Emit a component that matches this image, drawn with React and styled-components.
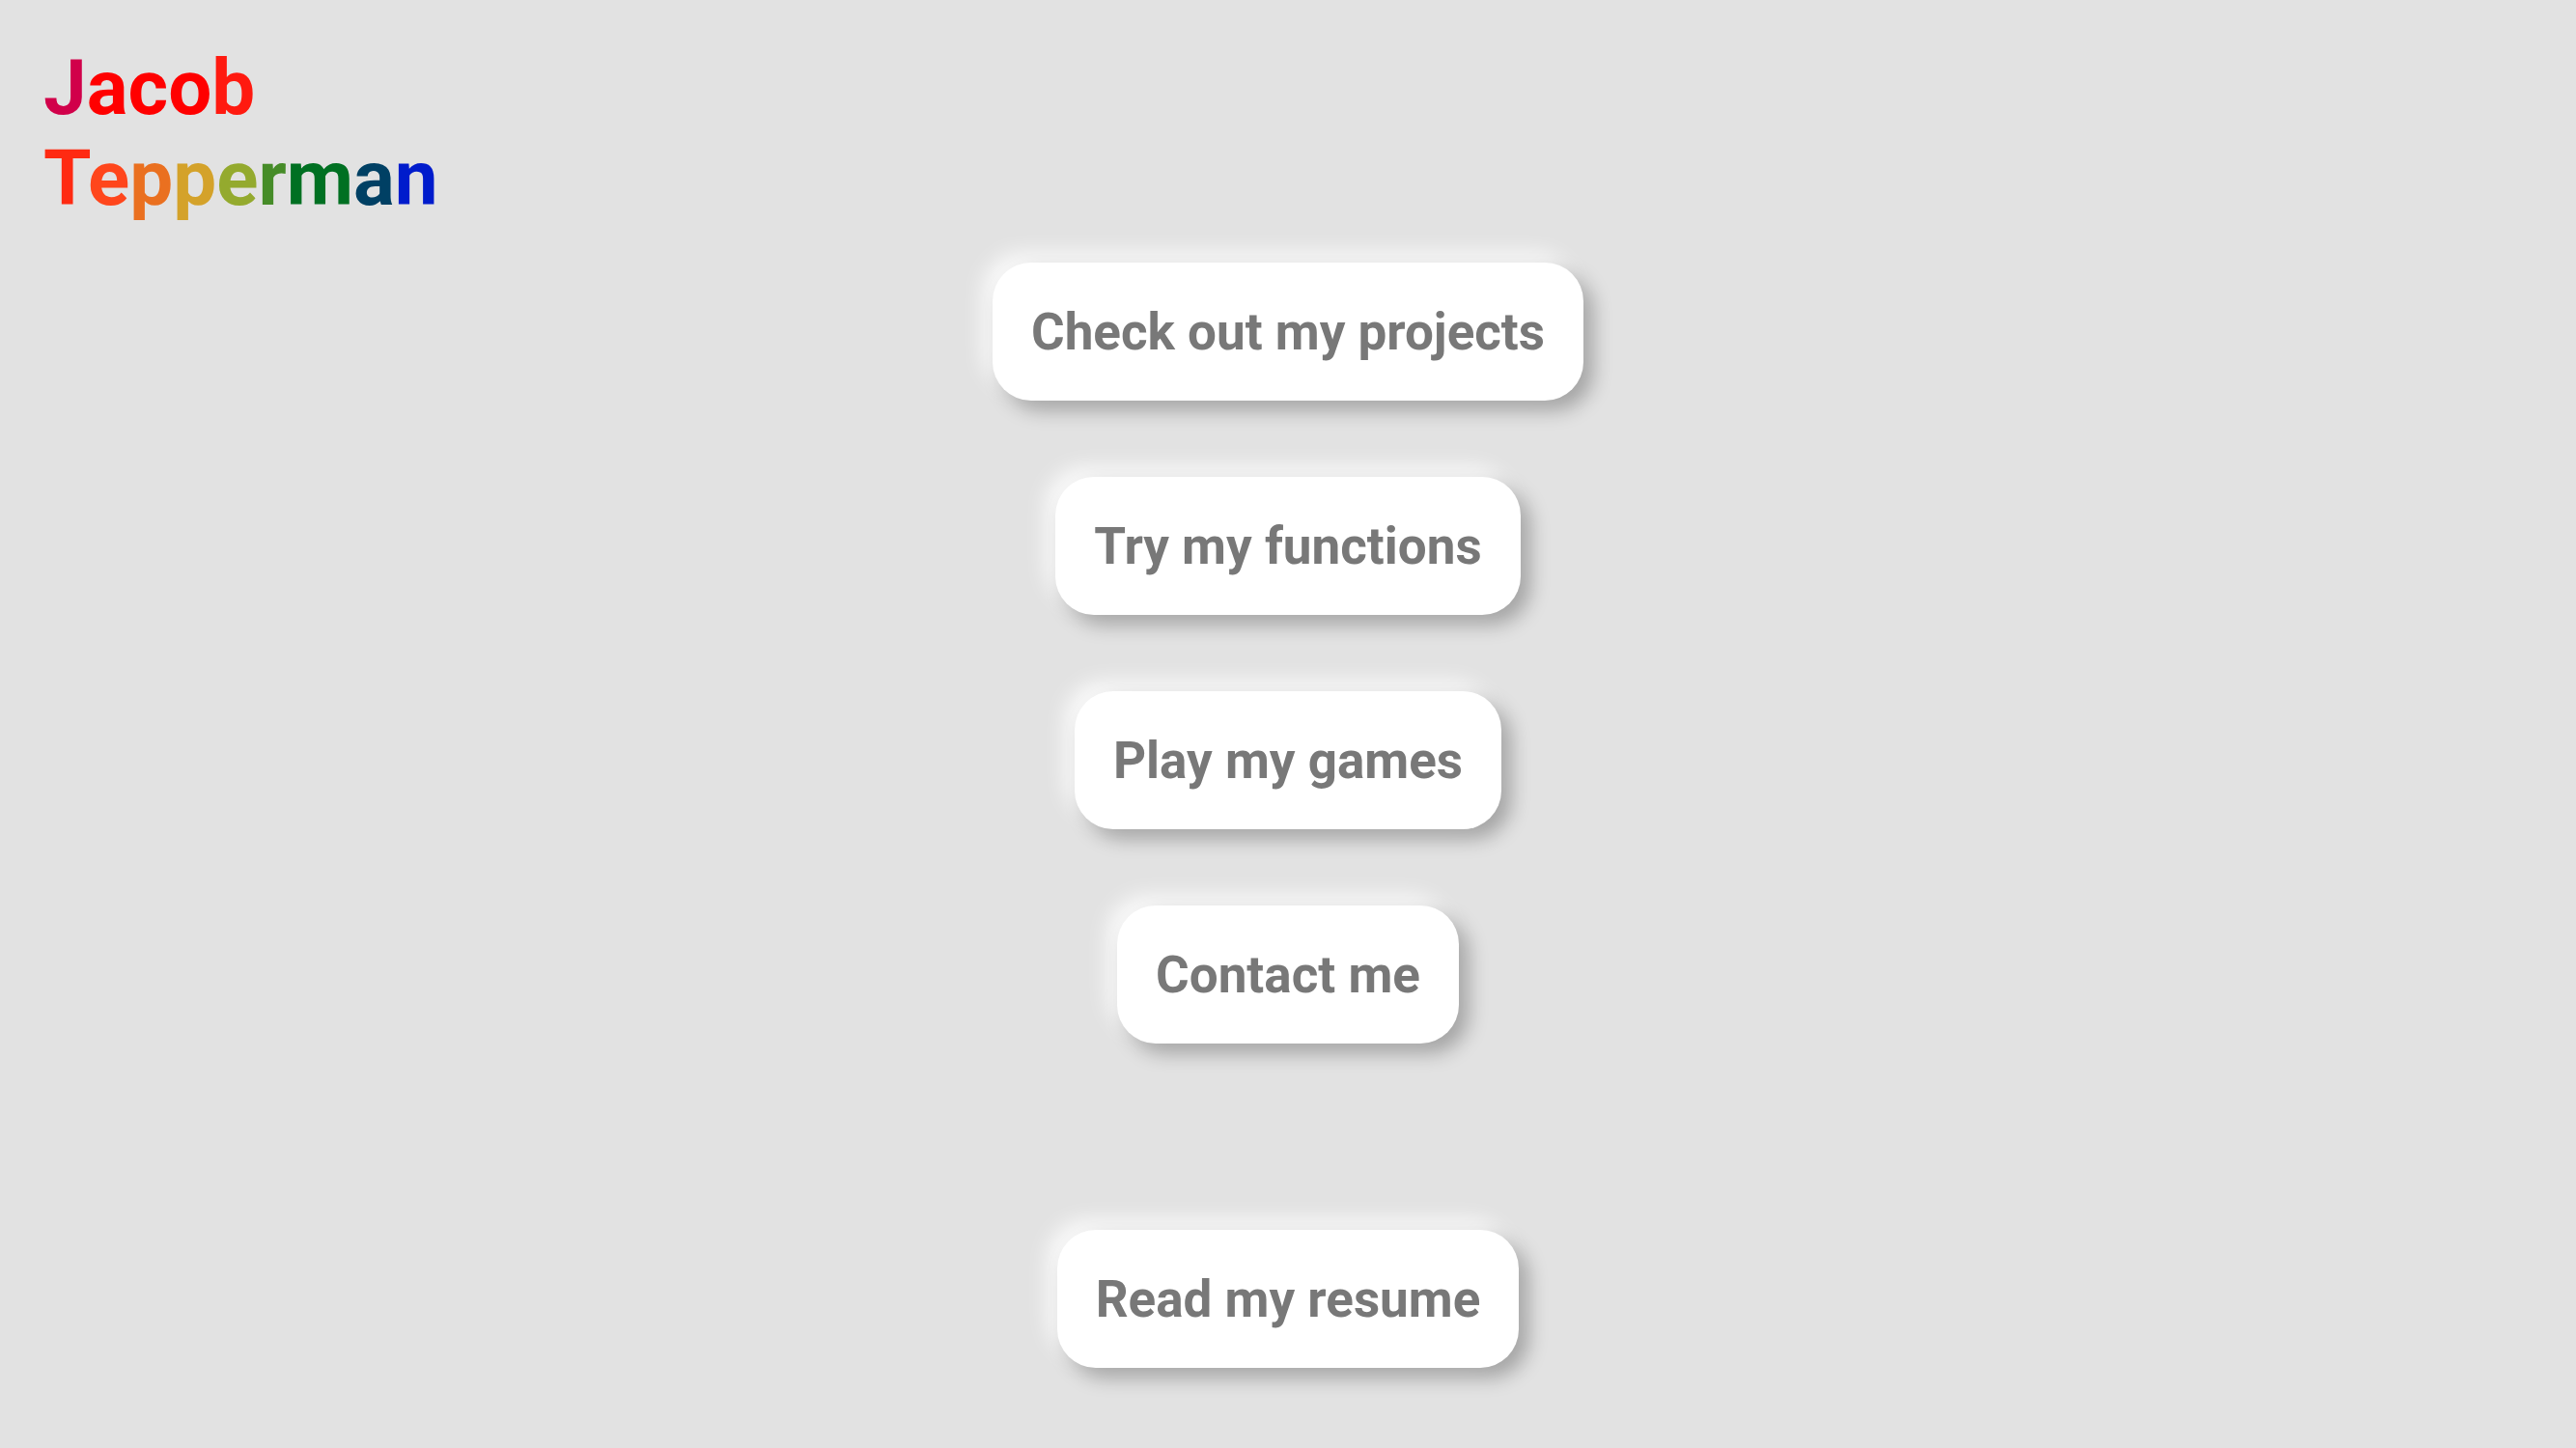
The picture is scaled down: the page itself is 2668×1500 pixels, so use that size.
import React from "react";
import styled, { createGlobalStyle } from "styled-components";

const GlobalStyle = createGlobalStyle`
  html, body {
    margin: 0;
    padding: 0;
    background-color: #e2e2e2;
  }
  body {
    font-family: Roboto, "Liberation Sans", sans-serif;
  }
`;

const Page = styled.div`
  min-height: 1500px;
  box-sizing: border-box;
  padding: 44px 0 0 45px;
  background-color: #e2e2e2;
`;

const Title = styled.h1`
  margin: 0;
  font-family: Roboto, "Liberation Sans", sans-serif;
  font-size: 80px;
  font-weight: 700;
  line-height: 94px;
  letter-spacing: 0;
`;

const Letter = styled.span`
  color: ${(props) => props.$color};
`;

const Menu = styled.nav`
  display: flex;
  flex-direction: column;
  align-items: center;
  gap: 79px;
  margin-top: 40px;
  margin-left: -45px;
`;

const MenuButton = styled.button`
  display: inline-flex;
  align-items: center;
  justify-content: center;
  box-sizing: border-box;
  height: 143px;
  padding: 0 40px;
  margin-top: ${(props) => (props.$spaced ? "114px" : "0")};
  border: none;
  border-radius: 40px;
  background-color: #ffffff;
  color: #787878;
  font-family: Roboto, "Liberation Sans", sans-serif;
  font-size: 53px;
  font-weight: 700;
  cursor: pointer;
  box-shadow: 10px 10px 20px rgba(0, 0, 0, 0.28),
    -10px -10px 22px rgba(255, 255, 255, 0.85);
`;

const firstName = [
  ["J", "#d1004a"],
  ["a", "#ff0000"],
  ["c", "#ff0000"],
  ["o", "#ff0000"],
  ["b", "#ff1a10"],
];

const lastName = [
  ["T", "#ff2a12"],
  ["e", "#ff461c"],
  ["p", "#ea7020"],
  ["p", "#d4a22a"],
  ["e", "#94aa2e"],
  ["r", "#468c28"],
  ["m", "#007022"],
  ["a", "#004064"],
  ["n", "#001ccc"],
];

const links = [
  "Check out my projects",
  "Try my functions",
  "Play my games",
  "Contact me",
];

const App = () => {
  return (
    <Page>
      <GlobalStyle />
      <Title>
        {firstName.map(([ch, color], i) => (
          <Letter key={`f-${i}`} $color={color}>
            {ch}
          </Letter>
        ))}
        <br />
        {lastName.map(([ch, color], i) => (
          <Letter key={`l-${i}`} $color={color}>
            {ch}
          </Letter>
        ))}
      </Title>
      <Menu>
        {links.map((label) => (
          <MenuButton key={label}>{label}</MenuButton>
        ))}
        <MenuButton $spaced>Read my resume</MenuButton>
      </Menu>
    </Page>
  );
};

export default App;
